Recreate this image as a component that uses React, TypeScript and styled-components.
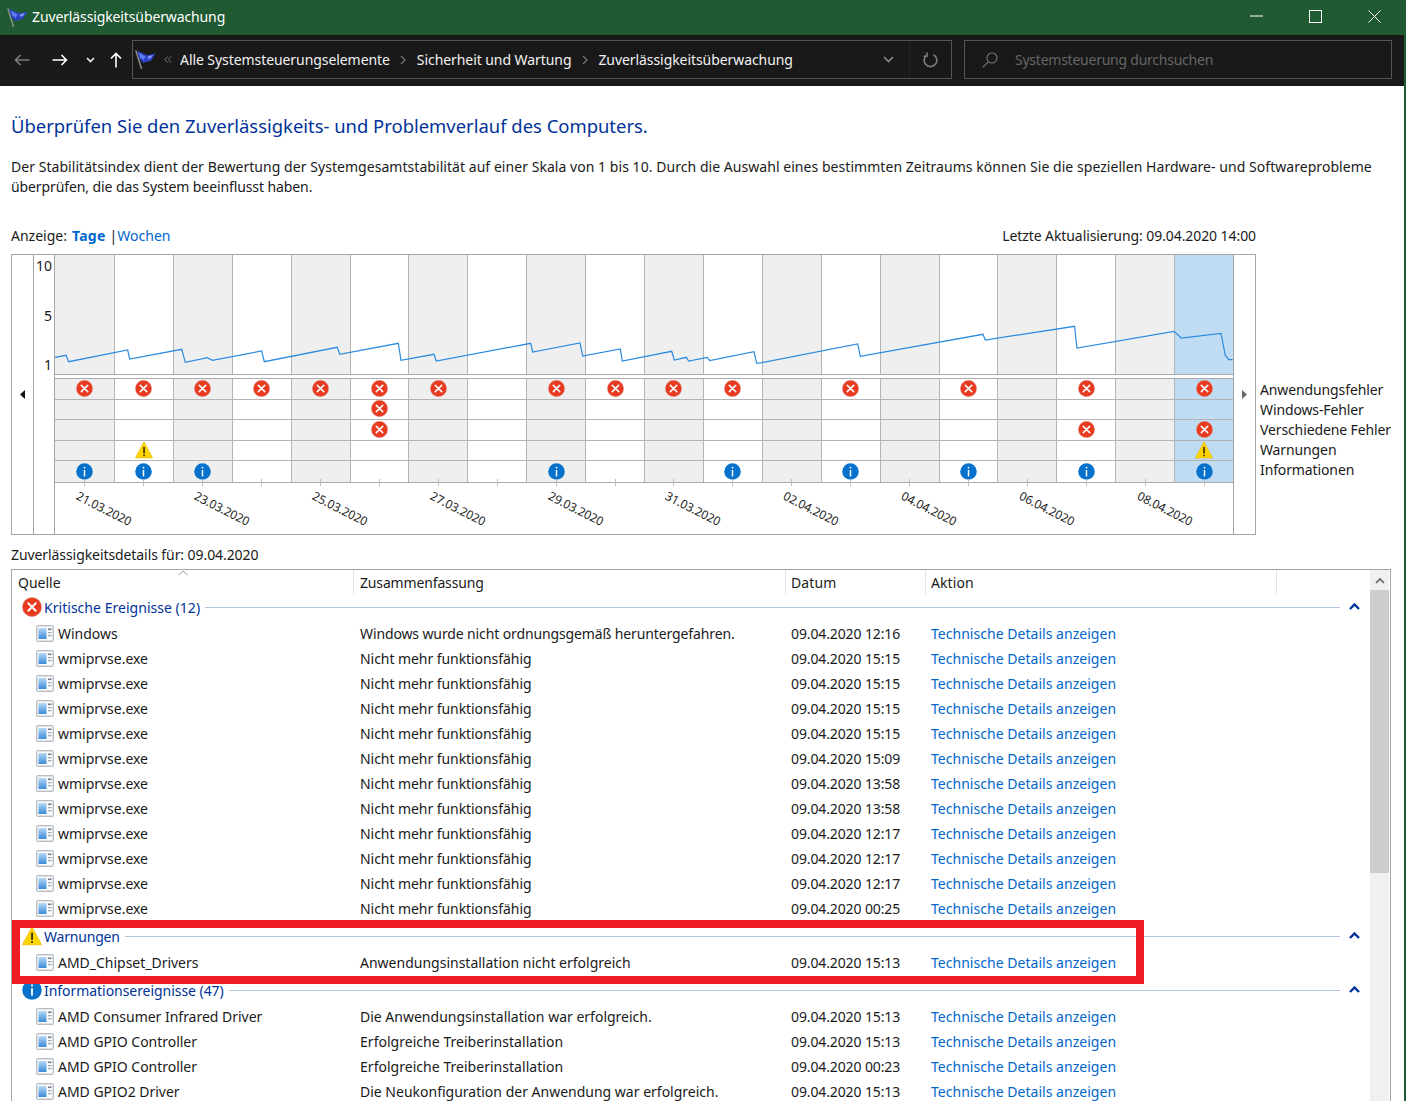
import React from "react";
import styled, { createGlobalStyle } from "styled-components";

const Global = createGlobalStyle`
  html, body { margin: 0; padding: 0; background: #1f5a32; }
  body { font-family: "Noto Sans", "Open Sans", "Liberation Sans", sans-serif; font-size: 14px; color: #1a1a1a; }
  #root { height: 1101px; overflow: hidden; }
`;

const Page = styled.div`
  width: 1404px; height: 1101px; overflow: hidden; background: #fff;
  display: flex; flex-direction: column;
`;
const TitleBar = styled.header`
  height: 35px; flex: none; background: #1f5a32; color: #fff;
  display: flex; align-items: center; padding-left: 7px;
`;
const TitleText = styled.span`
  margin-left: 4px; font-size: 14px; line-height: 33px; height: 35px; flex: 1; letter-spacing: -0.12px;
`;
const WinButton = styled.div`
  width: 59px; height: 35px; display: flex; align-items: center; justify-content: center;
  padding-bottom: 3px; box-sizing: border-box;
`;
const NavBar = styled.nav`
  height: 51px; flex: none; background: #191919; display: flex; align-items: flex-start;
  padding-top: 5px; box-sizing: border-box;
`;
const NavButtons = styled.div`
  width: 132px; height: 39px; flex: none; display: flex; align-items: center; padding-left: 13px; box-sizing: border-box;
`;
const NavIcon = styled.span<{ $w: number }>`
  display: flex; width: ${p => p.$w}px; justify-content: center; flex: none;
  svg { flex: none; }
`;
const AddressBox = styled.div`
  width: 820px; height: 39px; flex: none; box-sizing: border-box; border: 1px solid #555;
  display: flex; align-items: center; padding-left: 2px; color: #f2f2f2;
`;
const Crumb = styled.span`
  font-size: 14px; white-space: nowrap; letter-spacing: -0.07px;
`;
const CrumbSep = styled.span<{ $w: number }>`
  width: ${p => p.$w}px; flex: none; display: flex; justify-content: center; color: #888;
`;
const AddressEnd = styled.div`
  margin-left: auto; display: flex; align-items: center; height: 100%;
`;
const ChevronSlot = styled.div`
  width: 42px; display: flex; justify-content: center; height: 100%; align-items: center; border-right: 1px solid #222;
`;
const RefreshSlot = styled.div`
  width: 41px; display: flex; justify-content: center;
`;
const SearchBox = styled.div`
  width: 428px; height: 39px; flex: none; margin-left: 12px; box-sizing: border-box; border: 1px solid #555;
  display: flex; align-items: center; padding-left: 17px; color: #666; font-size: 14px;
`;
const SearchText = styled.span`
  margin-left: 17px; letter-spacing: -0.24px;
`;
const Content = styled.main`
  padding: 27px 0 0 11px; flex: 1; min-height: 0; position: relative;
`;
const Heading = styled.h1`
  margin: 0; font-weight: 400; font-size: 18.43px; line-height: 26px; color: #003399;
`;
const Description = styled.div`
  margin-top: 18px; font-size: 14px; line-height: 20px; width: 1380px;
`;
const DescriptionLine = styled.p<{ $ls: number }>`
  margin: 0; white-space: nowrap; letter-spacing: ${p => p.$ls}px;
`;
const ViewRow = styled.div`
  margin-top: 29px; width: 1245px; display: flex; justify-content: space-between; line-height: 20px; font-size: 14px;
`;
const ViewSwitch = styled.div`
  display: flex;
`;
const ViewBar = styled.span`
  margin: 0 0 0 4px;
`;
const UpdatedText = styled.span`
  letter-spacing: -0.08px;
`;
const Link = styled.span<{ $bold?: boolean }>`
  color: #0066cc; font-weight: ${p => (p.$bold ? 700 : 400)};
  letter-spacing: ${p => (p.$bold ? "0.25px" : "0.03px")};
  margin-left: ${p => (p.$bold ? "5px" : "0")};
`;
const ChartRow = styled.div`
  margin-top: 8px; display: flex; align-items: flex-start; width: 1385px;
`;
const ChartBox = styled.section`
  width: 1245px; height: 281px; flex: none; box-sizing: border-box; border: 1px solid #a5a5a5;
  display: grid; grid-template-columns: 22px 21px 1179px 1fr;
`;
const ArrowCell = styled.div<{ $border?: boolean }>`
  display: flex; align-items: flex-start; justify-content: center; padding-top: 135px;
  ${p => (p.$border ? "border-right: 1px solid #a5a5a5;" : "")}
`;
const YAxis = styled.div`
  height: 120px; box-sizing: border-box; padding: 1px 2px 0 0;
  display: flex; flex-direction: column; justify-content: space-between; align-items: flex-end; line-height: 20px; font-size: 14px;
`;
const YAxisCol = styled.div`
  border-right: 1px solid #a5a5a5;
`;
const Plot = styled.div`
  display: flex; flex-direction: column; min-width: 0; border-right: 1px solid #a5a5a5; overflow: visible;
`;
const Trend = styled.div`
  height: 120px; flex: none; box-sizing: border-box; border-bottom: 1px solid #aaa;
  display: grid; grid-template-columns: repeat(20, 1fr); position: relative;
`;
const DayCol = styled.div<{ $kind: number }>`
  border-left: 1px solid #b4b4b4;
  background: ${p => (p.$kind === 2 ? "#c0dcf3" : p.$kind === 1 ? "#efefef" : "#fff")};
  &:first-of-type { border-left: 0; }
`;
const TrendSvg = styled.svg`
  position: absolute; left: 0; top: 0; width: 100%; height: 100%; pointer-events: none;
`;
const Events = styled.div`
  margin-top: 3px; border-top: 1px solid #aaa; border-bottom: 1px solid #aaa;
  display: grid; grid-template-columns: repeat(20, 1fr); grid-auto-rows: 20.6px; flex: none;
`;
const EventCell = styled.div<{ $kind: number; $last: boolean; $first: boolean }>`
  background: ${p => (p.$kind === 2 ? "#c0dcf3" : p.$kind === 1 ? "#efefef" : "#fff")};
  border-left: ${p => (p.$first ? "0" : "1px solid #b4b4b4")};
  border-bottom: ${p => (p.$last ? "0" : "1px solid #b4b4b4")};
  box-sizing: border-box; display: flex; align-items: center; justify-content: center; padding-bottom: 1px;
`;
const DateAxis = styled.div`
  display: grid; grid-template-columns: repeat(20, 1fr); height: 52px; flex: none;
`;
const DateCell = styled.div`
  position: relative; display: flex; align-items: center; justify-content: center; min-width: 0;
  &::before {
    content: ""; position: absolute; left: 50%; top: -4px; width: 1px; height: 7px; background: #bdbdbd;
  }
`;
const DateLabel = styled.span`
  flex: none; font-size: 12px; letter-spacing: -0.12px; white-space: nowrap; transform: translate(20px, 0) rotate(27deg); color: #222;
`;
const Legend = styled.ul`
  list-style: none; margin: 126px 0 0 4px; padding: 0; font-size: 14px; line-height: 20px; white-space: nowrap; letter-spacing: -0.12px;
`;
const DetailsLabel = styled.div`
  margin-top: 10px; line-height: 20px; font-size: 14px; letter-spacing: -0.08px;
`;
const Table = styled.section`
  margin-top: 4px; width: 1380px; height: 560px; box-sizing: border-box; border: 1px solid #a5a5a5;
  display: flex; padding-right: 1px; position: relative;
`;
const TableMain = styled.div`
  width: 1358px; flex: none;
`;
const HeaderRow = styled.div`
  height: 25px; display: grid; grid-template-columns: 342px 432px 140px 351px; position: relative;
`;
const HeaderCell = styled.div<{ $pad: number; $ls?: number }>`
  padding-left: ${p => p.$pad}px; line-height: 25px; border-right: 1px solid #e5e5e5; font-size: 14px; white-space: nowrap;
  letter-spacing: ${p => p.$ls ?? 0}px;
`;
const SortCaret = styled.svg`
  position: absolute; left: 166px; top: 0;
`;
const Group = styled.div<{ $gap: number }>`
  height: 26px; margin-top: ${p => p.$gap}px; display: flex; align-items: center; padding: 0 10px 2px; box-sizing: border-box;
`;
const GroupIcon = styled.span`
  width: 20px; height: 20px; flex: none; display: flex; margin-right: 2px;
`;
const GroupTitle = styled.span<{ $ls: number }>`
  color: #003399; font-size: 14px; white-space: nowrap; letter-spacing: ${p => p.$ls}px;
`;
const GroupLine = styled.span`
  flex: 1; height: 1px; background: #b4c4e4; margin-left: 5px;
`;
const GroupCaret = styled.svg`
  margin-left: 9px; flex: none; margin-bottom: 3px;
`;
const Row = styled.div`
  height: 25px; display: grid; grid-template-columns: 341px 432px 140px 351px; align-items: center; font-size: 14px; white-space: nowrap;
`;
const SourceCell = styled.div`
  display: flex; align-items: center; padding-left: 24px; gap: 4px; letter-spacing: -0.02px;
`;
const Cell = styled.div<{ $pad: number; $tight?: number }>`
  padding-left: ${p => p.$pad}px; letter-spacing: ${p => p.$tight ?? 0}px;
`;
const Scrollbar = styled.div`
  width: 19px; flex: none; background: #f0f0f0; display: flex; flex-direction: column;
`;
const ScrollButton = styled.div`
  height: 20px; flex: none; display: flex; align-items: center; justify-content: center;
`;
const ScrollThumb = styled.div`
  height: 283px; flex: none; background: #cdcdcd;
`;
const Highlight = styled.div`
  position: absolute; left: 0; top: 350px; width: 1132px; height: 64px; box-sizing: border-box;
  border: 8px solid #ee1c25; pointer-events: none;
`;
const RightEdge = styled.div`
  position: fixed; top: 35px; right: 0; width: 2px; bottom: 0; background: #1f5a32;
`;

const Flag = () => (
  <svg width="21" height="20" viewBox="0 0 21 20">
    <path d="M.8 .5 L6.6 19" stroke="#8d8f86" strokeWidth="1.5" />
    <path d="M2 1 C5 1.4 7 3.4 10 4.6 C13 5.6 17 4.4 20.4 3.4 C18.6 6 17.6 8.4 15.8 11 C13 11.4 10.5 12 8 13 C7 11 6 9.8 4.6 9.4 Z" fill="#2c44c4" />
    <path d="M4 3 C6 3.4 8 5.4 10.5 6.4 L8.6 10 C7.6 9 6.6 8 5.2 7.6 Z" fill="#5f7df0" />
    <path d="M12.6 6.4 L18 5 L16 8 L13 8.8 Z" fill="#7f98f5" />
  </svg>
);
const ErrorIcon = ({ size = 17 }: { size?: number }) => (
  <svg width={size} height={size} viewBox="0 0 16 16">
    <circle cx="8" cy="8" r="7.7" fill="#e83a1e" stroke="#e0a094" strokeWidth=".5" />
    <path d="M5 5 L11 11 M11 5 L5 11" stroke="#fff" strokeWidth="1.5" strokeLinecap="round" />
  </svg>
);
const WarnIcon = ({ size = 18 }: { size?: number }) => (
  <svg width={size} height={size} viewBox="0 0 17 17">
    <path d="M8.5 .8 L16.7 16 H.3 Z" fill="#fed500" stroke="#e8b900" strokeWidth=".6" />
    <rect x="7.9" y="5.6" width="1.3" height="6.2" fill="#111" />
    <rect x="7.9" y="12.9" width="1.3" height="1.5" fill="#111" />
  </svg>
);
const InfoIcon = ({ size = 17 }: { size?: number }) => (
  <svg width={size} height={size} viewBox="0 0 16 16">
    <circle cx="8" cy="8" r="7.8" fill="#0672cb" />
    <rect x="7.3" y="6.6" width="1.4" height="6" fill="#fff" />
    <rect x="7.3" y="3.6" width="1.4" height="1.6" fill="#fff" />
  </svg>
);
const AppIcon = () => (
  <svg width="18" height="17" viewBox="0 0 18 17">
    <defs>
      <linearGradient id="appPanel" x1="0" y1="0" x2="0" y2="1">
        <stop offset="0" stopColor="#b5d8f4" />
        <stop offset="1" stopColor="#3c8bd8" />
      </linearGradient>
    </defs>
    <rect x=".5" y=".5" width="17" height="16" rx="1" fill="#dfe2e6" stroke="#b9bcc0" />
    <rect x="2" y="2" width="14" height="13" fill="#fbfcfd" />
    <rect x="2.5" y="3" width="8" height="11" fill="url(#appPanel)" />
    <rect x="12" y="3.5" width="3.5" height="1.6" fill="#6f7986" />
    <rect x="12" y="7" width="3.5" height="1.3" fill="#a0a8b2" />
    <rect x="12" y="10" width="3.5" height="1.3" fill="#a0a8b2" />
  </svg>
);
const UpCaret = () => (
  <GroupCaret width="11" height="8" viewBox="0 0 11 8">
    <path d="M1 7 L5.5 2.5 L10 7" fill="none" stroke="#003399" strokeWidth="2.4" />
  </GroupCaret>
);

const LINE = [
  [55,357.3],[66,355.3],[68.7,361.7],[127.7,350],[129.7,359],[181.7,349.3],[185.3,362.3],[207.3,357.7],[212.3,360.3],
  [261.7,351],[264.3,361.7],[337.3,347.3],[339.7,354.3],[398.3,343.3],[401,360.3],[434,354.3],[436.3,361],[530.7,343.3],
  [532.7,352],[580,343],[582.7,356],[620.3,349],[622.3,361],[671.7,351.3],[674.3,360],[686.3,357.3],[688.7,361],
  [707.3,357.3],[709.7,360.7],[754,351.7],[756.7,363.3],[762,362.6],[857.7,344],[860.3,356.3],[983,334.3],[985.3,340],
  [1074.5,326.3],[1077,348],[1174,331.3],[1181.3,338],[1221,333.3],[1225.3,355.3],[1228.7,359.7],[1232.7,359.7],
];
const points = LINE.map(([x, y]) => `${x - 55},${y - 255}`).join(" ");

const kindOf = (i: number) => (i === 19 ? 2 : i % 2 === 0 ? 1 : 0);
const DAYS = Array.from({ length: 20 }, (_, i) => i);
const DATES = ["21.03.2020","","23.03.2020","","25.03.2020","","27.03.2020","","29.03.2020","","31.03.2020","","02.04.2020","","04.04.2020","","06.04.2020","","08.04.2020",""];
const EVENTS: number[][] = [
  [0,1,2,3,4,5,6,8,9,10,11,13,15,17,19],
  [5],
  [5,17,19],
  [1,19],
  [0,1,2,8,11,13,15,17,19],
];

const LEGEND = ["Anwendungsfehler","Windows-Fehler","Verschiedene Fehler","Warnungen","Informationen"];

type RowData = [string, string, string, number];

const critical: RowData[] = [
  ["Windows","Windows wurde nicht ordnungsgemäß heruntergefahren.","09.04.2020 12:16",-0.12],
  ...["15:15","15:15","15:15","15:15","15:09","13:58","13:58","12:17","12:17","12:17","00:25"].map(
    (t): RowData => ["wmiprvse.exe","Nicht mehr funktionsfähig",`09.04.2020 ${t}`,-0.06]
  ),
];
const warnings: RowData[] = [
  ["AMD_Chipset_Drivers","Anwendungsinstallation nicht erfolgreich","09.04.2020 15:13",0],
];
const infos: RowData[] = [
  ["AMD Consumer Infrared Driver","Die Anwendungsinstallation war erfolgreich.","09.04.2020 15:13",0],
  ["AMD GPIO Controller","Erfolgreiche Treiberinstallation","09.04.2020 15:13",0.03],
  ["AMD GPIO Controller","Erfolgreiche Treiberinstallation","09.04.2020 00:23",0.03],
  ["AMD GPIO2 Driver","Die Neukonfiguration der Anwendung war erfolgreich.","09.04.2020 15:13",0],
];

const Rows = ({ data }: { data: RowData[] }) => (
  <>
    {data.map(([a, b, c, ls], i) => (
      <Row key={i}>
        <SourceCell><AppIcon />{a}</SourceCell>
        <Cell $pad={7} $tight={ls}>{b}</Cell>
        <Cell $pad={6} $tight={-0.12}>{c}</Cell>
        <Cell $pad={6}><Link>Technische Details anzeigen</Link></Cell>
      </Row>
    ))}
  </>
);

export default function App() {
  return (
    <Page>
      <Global />
      <TitleBar>
        <Flag />
        <TitleText>Zuverlässigkeitsüberwachung</TitleText>
        <WinButton>
          <svg width="13" height="2" viewBox="0 0 13 2"><path d="M0 1 H13" stroke="#fff" /></svg>
        </WinButton>
        <WinButton>
          <svg width="13" height="13" viewBox="0 0 13 13"><rect x=".5" y=".5" width="12" height="12" fill="none" stroke="#fff" /></svg>
        </WinButton>
        <WinButton>
          <svg width="13" height="13" viewBox="0 0 13 13"><path d="M.5 .5 L12.5 12.5 M12.5 .5 L.5 12.5" stroke="#fff" /></svg>
        </WinButton>
      </TitleBar>
      <NavBar>
        <NavButtons>
          <NavIcon $w={17}>
            <svg width="16" height="12" viewBox="0 0 16 12"><path d="M15.5 6 H1.5 M6.5 1 L1.5 6 L6.5 11" fill="none" stroke="#7d7d7d" strokeWidth="1.6" /></svg>
          </NavIcon>
          <NavIcon $w={22} />
          <NavIcon $w={16}>
            <svg width="16" height="12" viewBox="0 0 16 12"><path d="M.5 6 H14.5 M9.5 1 L14.5 6 L9.5 11" fill="none" stroke="#fff" strokeWidth="1.6" /></svg>
          </NavIcon>
          <NavIcon $w={44}>
            <svg width="9" height="6" viewBox="0 0 9 6"><path d="M1 1 L4.5 4.5 L8 1" fill="none" stroke="#eee" strokeWidth="1.6" /></svg>
          </NavIcon>
          <NavIcon $w={8}>
            <svg width="12" height="16" viewBox="0 0 12 16"><path d="M6 15.5 V1.5 M1 6.5 L6 1.5 L11 6.5" fill="none" stroke="#fff" strokeWidth="1.6" /></svg>
          </NavIcon>
        </NavButtons>
        <AddressBox>
          <Flag />
          <CrumbSep $w={24}>
            <svg width="8" height="7" viewBox="0 0 8 7"><path d="M3.5 .5 L.8 3.5 L3.5 6.5 M7 .5 L4.3 3.5 L7 6.5" fill="none" stroke="#777" /></svg>
          </CrumbSep>
          <Crumb>Alle Systemsteuerungselemente</Crumb>
          <CrumbSep $w={27}>
            <svg width="6" height="10" viewBox="0 0 6 10"><path d="M1 1 L5 5 L1 9" fill="none" stroke="#777" strokeWidth="1.2" /></svg>
          </CrumbSep>
          <Crumb>Sicherheit und Wartung</Crumb>
          <CrumbSep $w={27}>
            <svg width="6" height="10" viewBox="0 0 6 10"><path d="M1 1 L5 5 L1 9" fill="none" stroke="#777" strokeWidth="1.2" /></svg>
          </CrumbSep>
          <Crumb>Zuverlässigkeitsüberwachung</Crumb>
          <AddressEnd>
            <ChevronSlot>
              <svg width="11" height="7" viewBox="0 0 11 7"><path d="M1 1 L5.5 5.5 L10 1" fill="none" stroke="#888" strokeWidth="1.6" /></svg>
            </ChevronSlot>
            <RefreshSlot>
              <svg width="15" height="16" viewBox="0 0 15 16"><path d="M4.4 2.8 A6.3 6.3 0 1 0 10.6 2.8 M4 .5 V4.2 H.5" fill="none" stroke="#7d7d7d" strokeWidth="1.6" /></svg>
            </RefreshSlot>
          </AddressEnd>
        </AddressBox>
        <SearchBox>
          <svg width="16" height="16" viewBox="0 0 16 16"><circle cx="10" cy="6" r="5" fill="none" stroke="#777" strokeWidth="1.1" /><path d="M6.4 9.6 L.8 15.4" stroke="#777" strokeWidth="1.2" /></svg>
          <SearchText>Systemsteuerung durchsuchen</SearchText>
        </SearchBox>
      </NavBar>
      <Content>
        <Heading>Überprüfen Sie den Zuverlässigkeits- und Problemverlauf des Computers.</Heading>
        <Description>
          <DescriptionLine $ls={0.047}>Der Stabilitätsindex dient der Bewertung der Systemgesamtstabilität auf einer Skala von 1 bis 10. Durch die Auswahl eines bestimmten Zeitraums können Sie die speziellen Hardware- und Softwareprobleme</DescriptionLine>
          <DescriptionLine $ls={-0.1}>überprüfen, die das System beeinflusst haben.</DescriptionLine>
        </Description>
        <ViewRow>
          <ViewSwitch>
            <span>Anzeige:</span>
            <Link $bold>Tage</Link>
            <ViewBar>|</ViewBar>
            <Link>Wochen</Link>
          </ViewSwitch>
          <UpdatedText>Letzte Aktualisierung: 09.04.2020 14:00</UpdatedText>
        </ViewRow>
        <ChartRow>
          <ChartBox>
            <ArrowCell $border>
              <svg width="5" height="9" viewBox="0 0 5 9"><path d="M5 0 V9 L0 4.5 Z" fill="#111" /></svg>
            </ArrowCell>
            <YAxisCol>
              <YAxis><span>10</span><span>5</span><span>1</span></YAxis>
            </YAxisCol>
            <Plot>
              <Trend>
                {DAYS.map(i => <DayCol key={i} $kind={kindOf(i)} />)}
                <TrendSvg viewBox="0 0 1178 119" preserveAspectRatio="none">
                  <polyline points={points} fill="none" stroke="#2b8be0" strokeWidth="1.2" />
                </TrendSvg>
              </Trend>
              <Events>
                {EVENTS.map((row, r) =>
                  DAYS.map(d => (
                    <EventCell key={`${r}-${d}`} $kind={kindOf(d)} $last={r === 4} $first={d === 0}>
                      {row.includes(d) && (r < 3 ? <ErrorIcon /> : r === 3 ? <WarnIcon /> : <InfoIcon />)}
                    </EventCell>
                  ))
                )}
              </Events>
              <DateAxis>
                {DATES.map((d, i) => (
                  <DateCell key={i}>{d && <DateLabel>{d}</DateLabel>}</DateCell>
                ))}
              </DateAxis>
            </Plot>
            <ArrowCell>
              <svg width="5" height="9" viewBox="0 0 5 9"><path d="M0 0 V9 L5 4.5 Z" fill="#666" /></svg>
            </ArrowCell>
          </ChartBox>
          <Legend>
            {LEGEND.map(l => <li key={l}>{l}</li>)}
          </Legend>
        </ChartRow>
        <DetailsLabel>Zuverlässigkeitsdetails für: 09.04.2020</DetailsLabel>
        <Table>
          <TableMain>
            <HeaderRow>
              <HeaderCell $pad={6}>Quelle</HeaderCell>
              <HeaderCell $pad={6} $ls={-0.15}>Zusammenfassung</HeaderCell>
              <HeaderCell $pad={5} $ls={0.1}>Datum</HeaderCell>
              <HeaderCell $pad={5} $ls={0.1}>Aktion</HeaderCell>
              <SortCaret width="10" height="6" viewBox="0 0 10 6"><path d="M.5 5 L5 1 L9.5 5" fill="none" stroke="#999" /></SortCaret>
            </HeaderRow>
            <Group $gap={0}>
              <GroupIcon><ErrorIcon size={20} /></GroupIcon>
              <GroupTitle $ls={0.03}>Kritische Ereignisse (12)</GroupTitle>
              <GroupLine />
              <UpCaret />
            </Group>
            <Rows data={critical} />
            <Group $gap={3}>
              <GroupIcon><WarnIcon size={20} /></GroupIcon>
              <GroupTitle $ls={-0.2}>Warnungen</GroupTitle>
              <GroupLine />
              <UpCaret />
            </Group>
            <Rows data={warnings} />
            <Group $gap={3}>
              <GroupIcon><InfoIcon size={20} /></GroupIcon>
              <GroupTitle $ls={-0.05}>Informationsereignisse (47)</GroupTitle>
              <GroupLine />
              <UpCaret />
            </Group>
            <Rows data={infos} />
          </TableMain>
          <Scrollbar>
            <ScrollButton>
              <svg width="10" height="7" viewBox="0 0 10 7"><path d="M1 6 L5 2 L9 6" fill="none" stroke="#606060" strokeWidth="1.6" /></svg>
            </ScrollButton>
            <ScrollThumb />
          </Scrollbar>
          <Highlight />
        </Table>
      </Content>
      <RightEdge />
    </Page>
  );
}
